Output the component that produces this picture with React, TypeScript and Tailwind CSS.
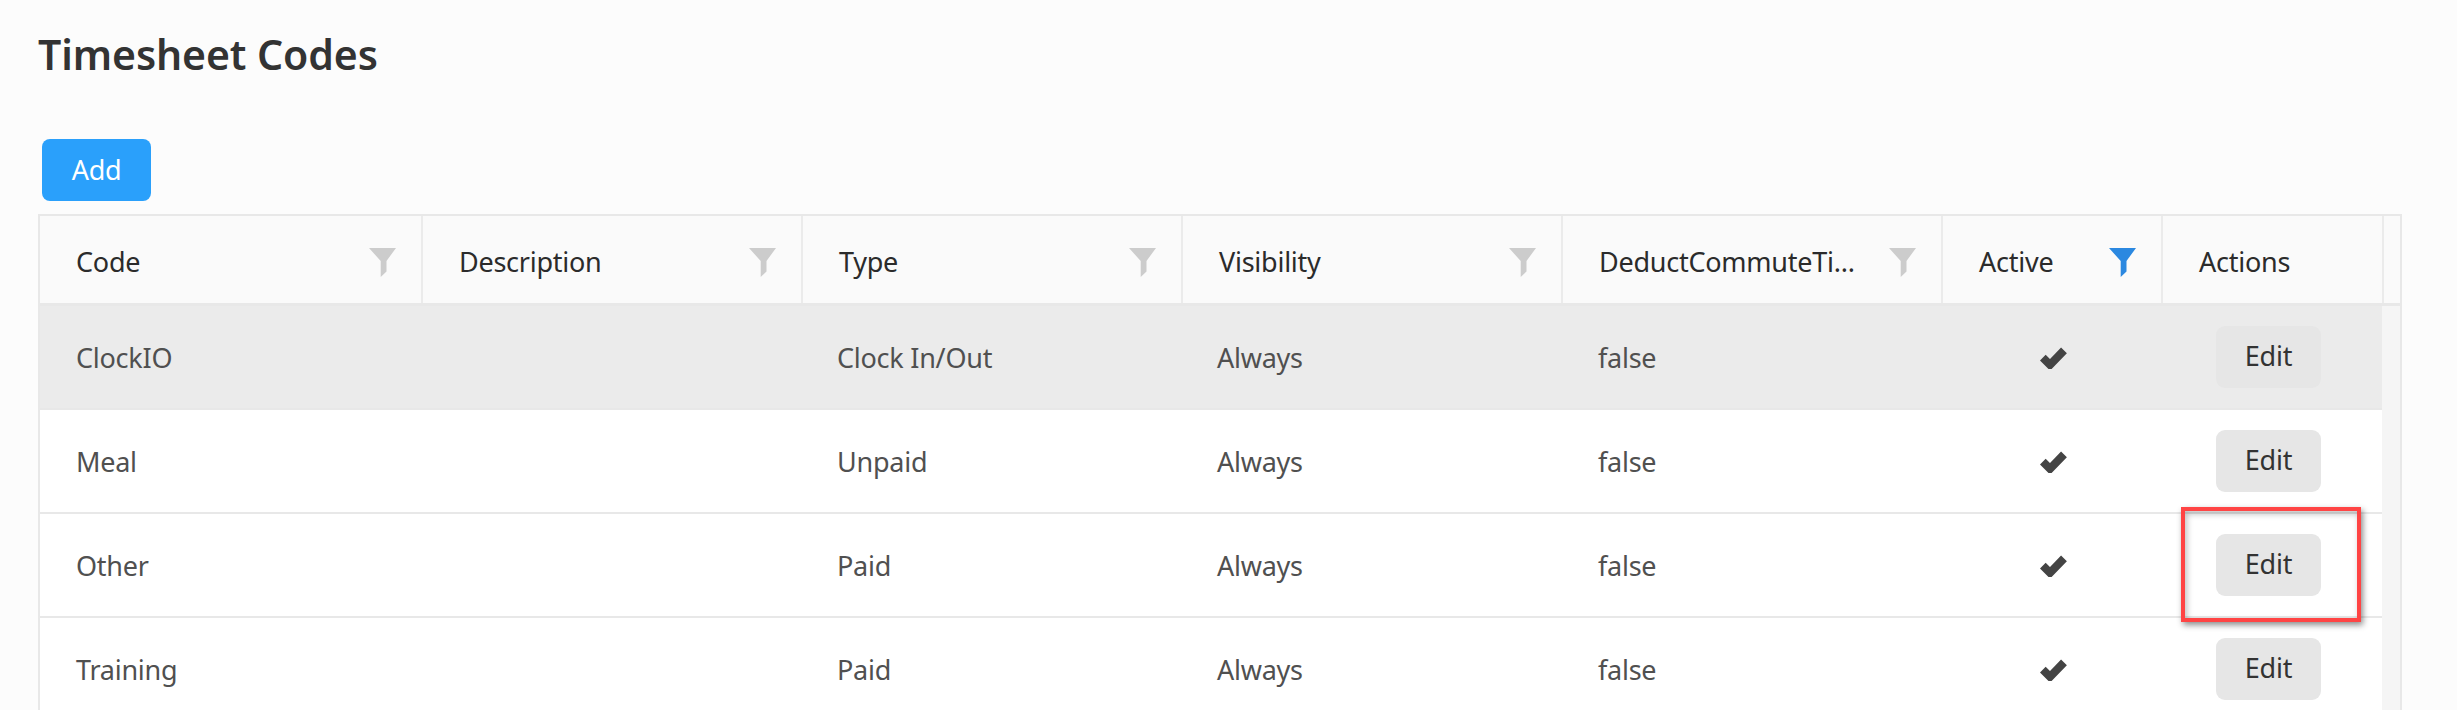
import React from 'react';

interface Row {
  code: string;
  type: string;
}

const rows: Row[] = [
  { code: 'ClockIO', type: 'Clock In/Out' },
  { code: 'Meal', type: 'Unpaid' },
  { code: 'Other', type: 'Paid' },
  { code: 'Training', type: 'Paid' }
];

const columns = ['Code', 'Description', 'Type', 'Visibility', 'DeductCommuteTi...'];

const FilterIcon: React.FC<{ className?: string }> = ({ className = '' }) => (
  <svg width="27" height="29" viewBox="0 0 27 29" className={`shrink-0 ${className}`}>
    <polygon points="0,0 27,0 17.5,13 17.5,23.5 11.7,29 11.7,13" fill="currentColor" />
  </svg>
);

const CheckIcon: React.FC = () => (
  <svg width="27" height="22" viewBox="0 0 25 20" className="-mt-[2px]">
    <polyline points="2.6,9.6 9.3,16.3 22.2,3" fill="none" stroke="#444444" strokeWidth="7.5" />
  </svg>
);

const App: React.FC = () => {
  return (
    <div className="relative h-[710px] overflow-hidden bg-[#fcfcfc] pl-[38px] font-['Noto_Sans',sans-serif] text-[27px] tracking-[-0.25px]">
      <h1 className="h-[139px] pt-[25px] text-[41px] leading-[58px] font-semibold tracking-[-0.1px] text-[#333333]">Timesheet Codes</h1>

      <button className="ml-1 block h-[62px] w-[109px] rounded-[8px] bg-[#2aa0fb] text-white">Add</button>

      <div className="mt-[13px] w-[2364px] border-2 border-b-0 border-[#e8e8e8]">
        {/* header */}
        <div className="flex h-[90px] border-b-[3px] border-[#e8e8e8] bg-[#fafafa] text-[#2b2b2b]">
          {columns.map((col) => (
            <div key={col} className="flex w-[380px] shrink-0 items-center justify-between border-r-2 border-[#ebebeb] pr-[25px] pl-9 first:w-[383px]">
              <span className="pt-[6px]">{col}</span>
              <FilterIcon className="mt-[6px] text-[#cccccc]" />
            </div>
          ))}
          <div className="flex w-[220px] shrink-0 items-center justify-between border-r-2 border-[#ebebeb] pr-[25px] pl-9">
            <span className="pt-[6px]">Active</span>
            <FilterIcon className="mt-[6px] text-[#2b88e0]" />
          </div>
          <div className="flex w-[221px] shrink-0 items-center border-r-2 border-[#ebebeb] pt-[6px] pl-9">Actions</div>
        </div>

        {/* body */}
        <div className="flex">
          <div className="w-[2342px] shrink-0">
            {rows.map((row, i) => (
              <div key={row.code} className={`flex h-[104px] items-center border-b-2 border-[#e8e8e8] pt-[3px] text-[#505050] ${i === 0 ? 'bg-[#ebebeb]' : 'bg-white'}`}>
                <div className="w-[383px] shrink-0 pl-9">{row.code}</div>
                <div className="w-[380px] shrink-0" />
                <div className="w-[380px] shrink-0 pl-[34px]">{row.type}</div>
                <div className="w-[380px] shrink-0 pl-[34px]">Always</div>
                <div className="w-[380px] shrink-0 pl-[35px]">false</div>
                <div className="flex w-[220px] shrink-0 justify-center">
                  <CheckIcon />
                </div>
                <div className="flex w-[219px] shrink-0 justify-center pr-2">
                  <button className="-mt-[3px] h-[62px] w-[105px] rounded-[9px] bg-[#e6e6e6] pb-[2px] text-[#333333]">Edit</button>
                </div>
              </div>
            ))}
          </div>
          <div className="w-[18px] bg-[#f5f5f5]" />
        </div>
      </div>

      {/* annotation */}
      <div className="absolute top-[507px] left-[2181px] h-[115px] w-[180px] border-4 border-[#ff4444] shadow-[2px_3px_6px_rgba(0,0,0,0.45),inset_2px_3px_6px_rgba(0,0,0,0.25)]" />
    </div>
  );
};

export default App;
